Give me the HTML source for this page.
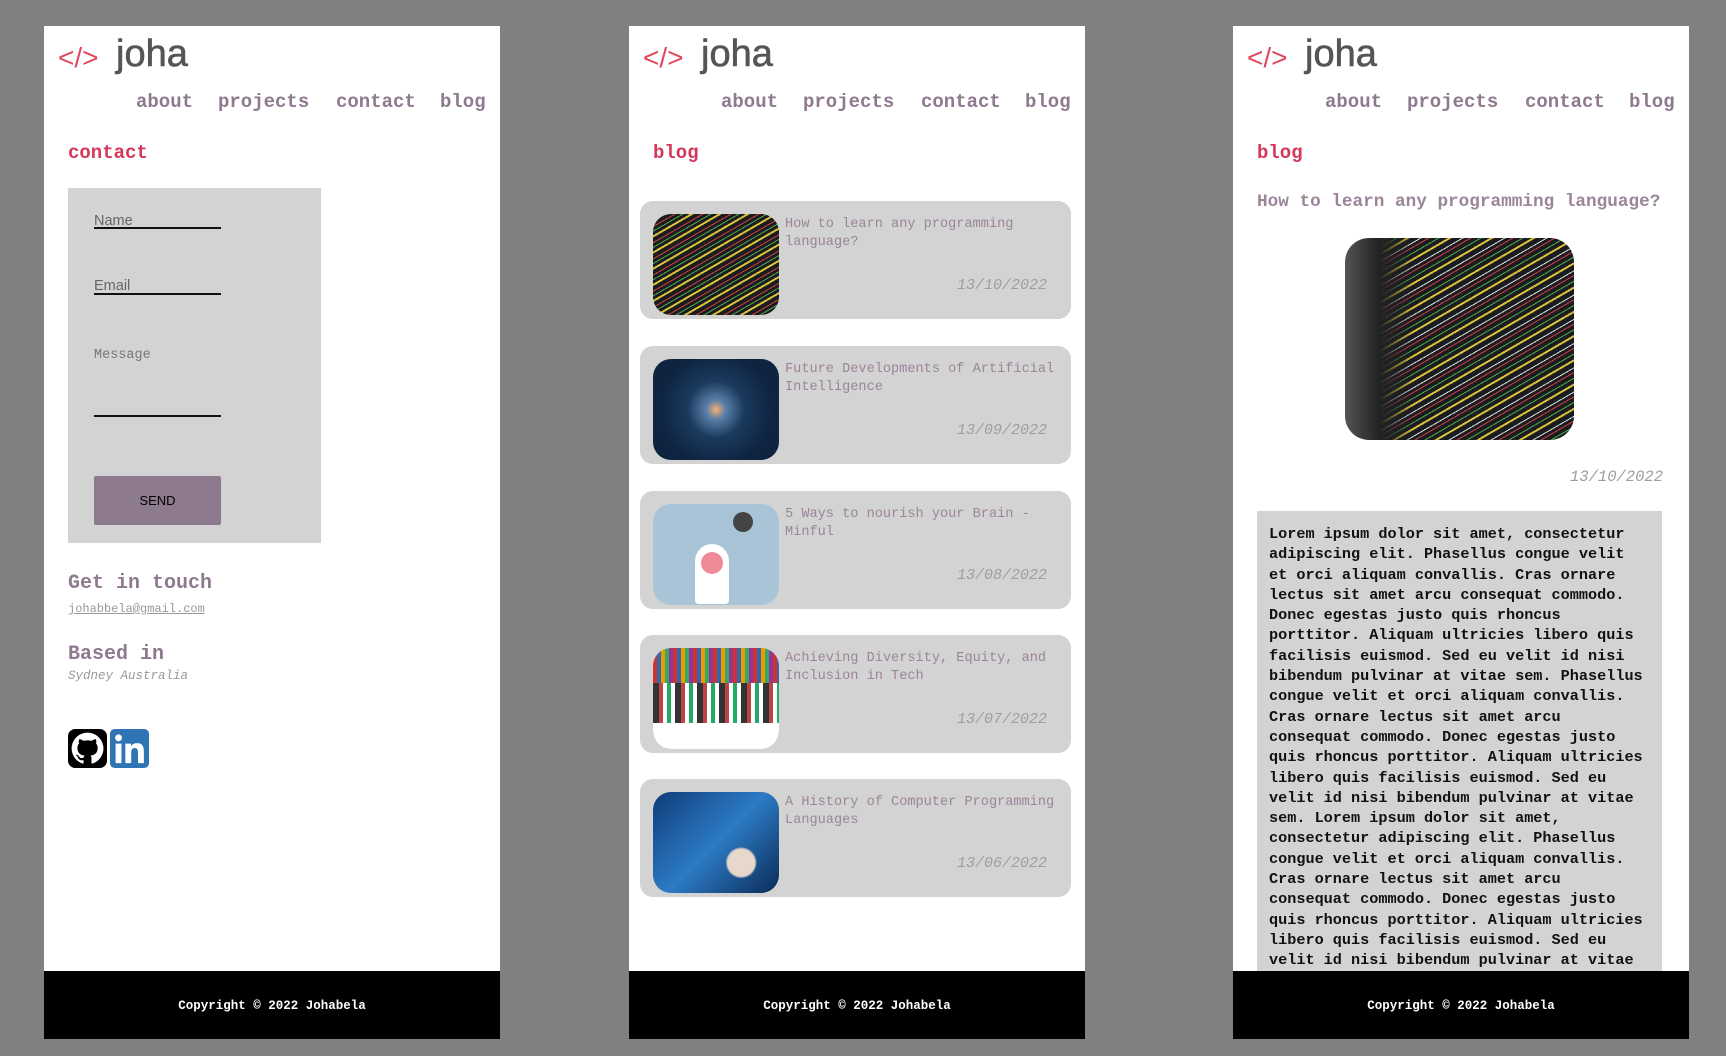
<!DOCTYPE html>
<html><head><meta charset="utf-8"><style>
*{margin:0;padding:0;box-sizing:border-box}
body{width:1726px;height:1056px;background:#808080;position:relative;overflow:hidden;font-family:"Liberation Mono",monospace}
.p{position:absolute;top:26px;width:456px;height:1013px;background:#fff;overflow:hidden}
.a{position:absolute;white-space:nowrap}
.logo1{left:14px;top:16px;font-family:"Liberation Sans",sans-serif;color:#e0475f;font-size:28px;}
.logo2{left:72px;top:7px;font-family:"Liberation Sans",sans-serif;color:#555;font-size:38px;font-weight:normal;-webkit-text-stroke:0.6px #555}
.nav{top:65px;font-size:19px;color:#8e7a8e;font-weight:bold}
.h{left:24px;top:116px;font-size:19px;color:#d6365a;font-weight:bold}
.foot{position:absolute;left:0;top:945px;width:456px;height:68px;background:#000;color:#fff;font-size:12.5px;font-weight:bold;text-align:center;line-height:70px}
.card{position:absolute;left:11px;width:431px;height:118px;background:#d3d3d3;border-radius:13px}
.img{position:absolute;left:13px;top:13px;width:126px;height:101px;border-radius:18px;overflow:hidden}
.ct{position:absolute;left:145px;top:15px;width:280px;font-size:13.6px;line-height:18px;color:#9a8599}
.cd{position:absolute;right:24px;top:76px;font-size:15px;font-style:italic;color:#9e9e9e}
</style></head><body>

<!-- Panel 1 -->
<div class="p" style="left:44px">
<div class="a logo1">&lt;/&gt;</div><div class="a logo2">joha</div>
<div class="a nav" style="left:92px">about</div>
<div class="a nav" style="left:174px">projects</div>
<div class="a nav" style="left:292px">contact</div>
<div class="a nav" style="left:396px">blog</div>
<div class="a h">contact</div>
<div class="a" style="left:24px;top:162px;width:253px;height:355px;background:#d3d3d3"></div>
<div class="a" style="left:50px;top:187px;font-family:'Liberation Sans',sans-serif;font-size:14.5px;color:#666">Name</div>
<div class="a" style="left:50px;top:201px;width:127px;height:2px;background:#111"></div>
<div class="a" style="left:50px;top:252px;font-family:'Liberation Sans',sans-serif;font-size:14.5px;color:#666">Email</div>
<div class="a" style="left:50px;top:267px;width:127px;height:2px;background:#111"></div>
<div class="a" style="left:50px;top:322px;font-size:13.5px;color:#777">Message</div>
<div class="a" style="left:50px;top:389px;width:127px;height:2px;background:#111"></div>
<div class="a" style="left:50px;top:450px;width:127px;height:49px;background:#8e7a8e;border-radius:2px;text-align:center;line-height:49px;font-family:'Liberation Sans',sans-serif;font-size:13px;color:#000">SEND</div>
<div class="a" style="left:24px;top:546px;font-size:20px;font-weight:bold;color:#8e7a8e">Get in touch</div>
<div class="a" style="left:24px;top:576px;font-size:12px;color:#999;text-decoration:underline">johabbela@gmail.com</div>
<div class="a" style="left:24px;top:617px;font-size:20px;font-weight:bold;color:#8e7a8e">Based in</div>
<div class="a" style="left:24px;top:643px;font-size:12.5px;font-style:italic;color:#999">Sydney Australia</div>
<svg class="a" style="left:24px;top:703px" width="39" height="39" viewBox="0 0 16 16"><rect width="16" height="16" rx="3" fill="#000"/><path fill="#fff" d="M8 1.5a6.5 6.5 0 0 0-2.05 12.67c.32.06.44-.14.44-.31v-1.1c-1.8.4-2.2-.87-2.2-.87-.3-.75-.72-.95-.72-.95-.59-.4.05-.4.05-.4.65.05 1 .67 1 .67.58 1 1.52.71 1.9.54.06-.42.23-.71.41-.87-1.440-.16-2.960-.72-2.960-3.2 0-.71.25-1.29.67-1.74-.07-.17-.29-.83.06-1.72 0 0 .55-.18 1.790.66a6.2 6.2 0 0 1 3.26 0c1.24-.84 1.79-.66 1.79-.66.35.89.13 1.55.06 1.72.42.45.67 1.03.67 1.74 0 2.49-1.52 3.04-2.97 3.2.23.2.44.6.44 1.2v1.78c0 .17.12.37.44.31A6.5 6.5 0 0 0 8 1.5z"/></svg>
<svg class="a" style="left:66px;top:703px" width="39" height="39" viewBox="0 0 16 16"><rect width="16" height="16" rx="2" fill="#2f74b5"/><rect x="2.3" y="6" width="2.4" height="8" fill="#fff"/><circle cx="3.5" cy="3.6" r="1.4" fill="#fff"/><path fill="#fff" d="M6.3 6h2.3v1.1c.4-.7 1.2-1.3 2.5-1.3 2.3 0 2.8 1.5 2.8 3.5V14h-2.4V9.8c0-1-.1-2-1.3-2s-1.5.9-1.5 1.9V14H6.3z"/></svg>
<div class="foot">Copyright © 2022 Johabela</div>
</div>

<!-- Panel 2 -->
<div class="p" style="left:629px">
<div class="a logo1">&lt;/&gt;</div><div class="a logo2">joha</div>
<div class="a nav" style="left:92px">about</div>
<div class="a nav" style="left:174px">projects</div>
<div class="a nav" style="left:292px">contact</div>
<div class="a nav" style="left:396px">blog</div>
<div class="a h">blog</div>
<div class="card" style="top:175px"><div class="img" style="background:repeating-linear-gradient(-30deg,#1a1c20 0 4px,#d8c23a 4px 6px,#1a1c20 6px 9px,#4caa4c 9px 10px,#1a1c20 10px 13px,#d04040 13px 14px)"></div><div class="ct">How to learn any programming language?</div><div class="cd">13/10/2022</div></div>
<div class="card" style="top:320px"><div class="img" style="background:radial-gradient(circle at 50% 50%,#f6b070 0,#5a7fa8 12%,#1b3a5e 35%,#0e2440 70%)"></div><div class="ct">Future Developments of Artificial Intelligence</div><div class="cd">13/09/2022</div></div>
<div class="card" style="top:465px"><div class="img" style="background:#a9c4d6"><div style="position:absolute;left:42px;top:40px;width:34px;height:60px;background:#fff;border-radius:17px 17px 4px 4px"></div><div style="position:absolute;left:48px;top:48px;width:22px;height:22px;background:#ef8a98;border-radius:50%"></div><div style="position:absolute;left:80px;top:8px;width:20px;height:20px;background:#444;border-radius:50%"></div></div><div class="ct">5 Ways to nourish your Brain - Minful</div><div class="cd">13/08/2022</div></div>
<div class="card" style="top:609px"><div class="img" style="background:repeating-linear-gradient(90deg,#c33 0 4px,#36a 4px 8px,#e90 8px 12px,#3a6 12px 16px,#939 16px 20px)"><div style="position:absolute;left:0;top:72px;width:126px;height:29px;background:#fff"></div><div style="position:absolute;left:0;top:35px;width:126px;height:40px;background:repeating-linear-gradient(90deg,#333 0 6px,#b44 6px 10px,#fff 10px 14px,#2a6 14px 18px,#fff 18px 22px)"></div></div><div class="ct">Achieving Diversity, Equity, and Inclusion in Tech</div><div class="cd">13/07/2022</div></div>
<div class="card" style="top:753px"><div class="img" style="background:radial-gradient(circle at 70% 70%,#e8d8cc 0,#e8d8cc 12%,transparent 14%),linear-gradient(135deg,#0f3b78,#2c7bc4 50%,#0b2b58)"></div><div class="ct">A History of Computer Programming Languages</div><div class="cd">13/06/2022</div></div>
<div class="foot">Copyright © 2022 Johabela</div>
</div>

<!-- Panel 3 -->
<div class="p" style="left:1233px">
<div class="a logo1">&lt;/&gt;</div><div class="a logo2">joha</div>
<div class="a nav" style="left:92px">about</div>
<div class="a nav" style="left:174px">projects</div>
<div class="a nav" style="left:292px">contact</div>
<div class="a nav" style="left:396px">blog</div>
<div class="a h">blog</div>
<div class="a" style="left:24px;top:166px;font-size:17.7px;font-weight:bold;color:#9a8599">How to learn any programming language?</div>
<div class="a" style="left:112px;top:212px;width:229px;height:202px;border-radius:24px;overflow:hidden;background:linear-gradient(90deg,#555 0,#222 15%,transparent 30%),repeating-linear-gradient(-30deg,#1a1c20 0 5px,#d8c23a 5px 7px,#1a1c20 7px 11px,#4caa4c 11px 12px,#1a1c20 12px 16px,#d04040 16px 17px,#1a1c20 17px 20px,#ddd 20px 21px)"></div>
<div class="a" style="right:26px;top:442px;font-size:15.5px;font-style:italic;color:#9e9e9e">13/10/2022</div>
<div class="a" style="left:24px;top:485px;width:405px;height:520px;background:#d3d3d3;padding:13px 12px;white-space:normal;font-size:15.2px;line-height:20.3px;font-weight:bold;color:#111">Lorem ipsum dolor sit amet, consectetur adipiscing elit. Phasellus congue velit et orci aliquam convallis. Cras ornare lectus sit amet arcu consequat commodo. Donec egestas justo quis rhoncus porttitor. Aliquam ultricies libero quis facilisis euismod. Sed eu velit id nisi bibendum pulvinar at vitae sem. Phasellus congue velit et orci aliquam convallis. Cras ornare lectus sit amet arcu consequat commodo. Donec egestas justo quis rhoncus porttitor. Aliquam ultricies libero quis facilisis euismod. Sed eu velit id nisi bibendum pulvinar at vitae sem. Lorem ipsum dolor sit amet, consectetur adipiscing elit. Phasellus congue velit et orci aliquam convallis. Cras ornare lectus sit amet arcu consequat commodo. Donec egestas justo quis rhoncus porttitor. Aliquam ultricies libero quis facilisis euismod. Sed eu velit id nisi bibendum pulvinar at vitae sem.</div>
<div class="foot">Copyright © 2022 Johabela</div>
</div>
</body></html>
